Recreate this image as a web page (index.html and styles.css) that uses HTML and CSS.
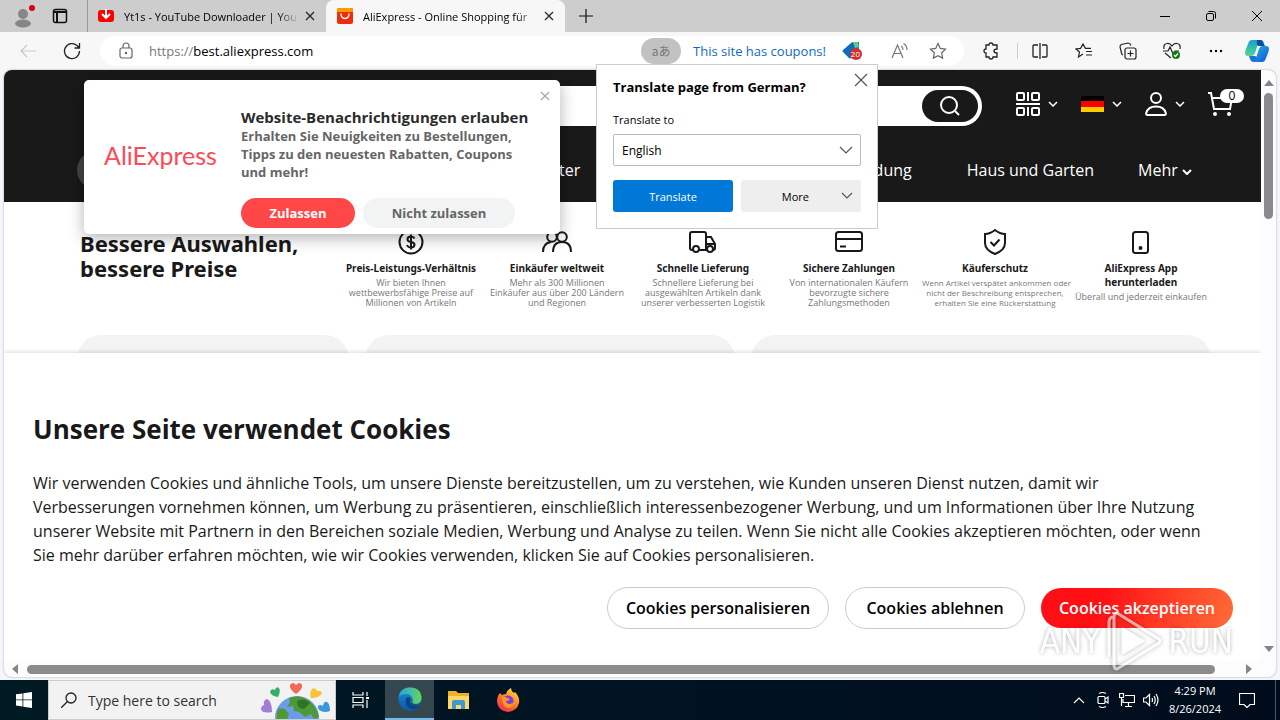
FILE: index.html
```html
<!DOCTYPE html>
<html lang="de">
<head>
  <meta charset="utf-8">
  <title>AliExpress - Online Shopping für</title>
  <link rel="stylesheet" href="styles.css">
</head>
<body>
<div class="tabs">
  <button class="profile" aria-label="Profile">
    <svg width="22" height="24" viewBox="0 0 22 24"><circle cx="10" cy="10" r="5" fill="#868686"/><ellipse cx="10" cy="19.500" rx="8" ry="4" fill="#868686"/><circle cx="19" cy="4" r="3" fill="#d80010"/></svg>
  </button>
  <button class="spaces" aria-label="Tab actions">
    <svg width="16" height="16" viewBox="0 0 16 16" fill="none" stroke="#111" stroke-width="1.500"><rect x="1.500" y="1.500" width="13" height="13" rx="2"/><path d="M1.500 4h13M5 4v10" stroke-width="2"/></svg>
  </button>
  <div class="tab">
    <svg width="16" height="16" viewBox="0 0 16 16"><rect y="2" width="16" height="12" rx="3" fill="#f00"/><path d="M8 1v8M4 6l4 4 4-4" fill="none" stroke="#fff" stroke-width="2"/></svg>
    <span class="tab-title">Yt1s - YouTube Downloader | You</span>
    <button aria-label="Close tab"><svg width="10" height="10" viewBox="0 0 10 10" stroke="#222" stroke-width="1.200"><path d="M1 1l8 8M9 1l-8 8"/></svg></button>
  </div>
  <div class="tab active">
    <svg width="16" height="16" viewBox="0 0 16 16"><rect width="16" height="16" rx="2" fill="#ee2c0a"/><path d="M0 4V2q0-2 2-2h12q2 0 2 2v2z" fill="#f90"/><path d="M4 5.500q0 5 4 5t4-5" fill="none" stroke="#fff" stroke-width="1.400"/></svg>
    <span class="tab-title">AliExpress - Online Shopping für</span>
    <button aria-label="Close tab"><svg width="10" height="10" viewBox="0 0 10 10" stroke="#222" stroke-width="1.200"><path d="M1 1l8 8M9 1l-8 8"/></svg></button>
  </div>
  <button class="new-tab" aria-label="New tab"><svg width="14" height="14" viewBox="0 0 14 14" stroke="#111" stroke-width="1.200"><path d="M7 0v14M0 7h14"/></svg></button>
  <div class="window-buttons">
    <button aria-label="Minimize"><svg width="10" height="10" viewBox="0 0 10 10" stroke="#000"><path d="M0 5.500h10"/></svg></button>
    <button aria-label="Restore"><svg width="10" height="10" viewBox="0 0 10 10" fill="none" stroke="#000"><rect x=".5" y="2.500" width="7" height="7" rx="1.500"/><path d="M2.500.5h5q2 0 2 2v5"/></svg></button>
    <button aria-label="Close"><svg width="10" height="10" viewBox="0 0 10 10" stroke="#000"><path d="M0 0l10 10M10 0L0 10"/></svg></button>
  </div>
</div>

<div class="toolbar">
  <button class="back" aria-label="Back"><svg width="16" height="14" viewBox="0 0 16 14" fill="none" stroke="#c9c9c9" stroke-width="1.200"><path d="M16 7H1M7 1L1 7l6 6"/></svg></button>
  <button class="reload" aria-label="Refresh"><svg width="18" height="18" viewBox="0 0 18 18" fill="none" stroke="#222" stroke-width="1.300"><path d="M16.500 9A7.500 7.500 0 1 1 14 3.500l2 2M16.500 1v5h-5"/></svg></button>
  <div class="address">
    <svg width="14" height="18" viewBox="0 0 14 18" fill="none" stroke="#666" stroke-width="1.200"><rect x="1" y="6" width="12" height="10" rx="2"/><path d="M4 6V4a3 3 0 0 1 6 0v2"/><circle cx="7" cy="11" r=".6" fill="#666"/></svg>
    <label for="url">https://</label><input id="url" value="best.aliexpress.com">
    <button class="lang" aria-label="Translate">aあ</button>
    <a class="coupons" href="#">This site has coupons!</a>
    <button class="tag" aria-label="Coupons">
      <svg width="22" height="20" viewBox="0 0 22 20"><path d="M1 9l8-7q1-1 3-1h5v6q0 2-1 3l-7 7q-1 1-2 0l-6-6q-1-1 0-2z" fill="#0f6cbd"/><path d="M11 1h5l1 5-4 1z" fill="#5ccf7a"/><circle cx="14" cy="13" r="6" fill="#d0302c"/></svg>
      <span>20</span>
    </button>
    <button class="read" aria-label="Read aloud"><svg width="18" height="18" viewBox="0 0 18 18" fill="none" stroke="#777" stroke-width="1.200"><path d="M1 16L6.500 3 12 16M3 11.500h7M10 4q2 1 2 4M12.500 1.500q3.500 2 3.500 6.500"/></svg></button>
    <button class="star" aria-label="Add to favorites"><svg width="18" height="18" viewBox="0 0 18 18" fill="none" stroke="#666" stroke-width="1.200"><path d="M9 1.500l2.300 4.900 5.200.7-3.800 3.700.9 5.300L9 13.600l-4.600 2.500.9-5.300L1.500 7.100l5.200-.7z"/></svg></button>
  </div>
  <div class="tools">
    <button aria-label="Extensions"><svg width="16" height="18" viewBox="0 0 16 18" fill="none" stroke="#222" stroke-width="1.300"><path d="M3 3h3q0-2 2-2t2 2h4v4q-3 0-3 2t3 2v4h-4q0 2-2 2t-2-2H3v-4q-2 0-2-2t2-2z"/></svg></button>
    <i></i>
    <button aria-label="Split screen"><svg width="16" height="16" viewBox="0 0 16 16" fill="none" stroke="#222" stroke-width="1.300"><path d="M6 2H2q-1 0-1 1v10q0 1 1 1h4M10 2h4q1 0 1 1v10q0 1-1 1h-4M8 0v16"/></svg></button>
    <button aria-label="Favorites"><svg width="18" height="16" viewBox="0 0 18 16" fill="none" stroke="#222" stroke-width="1.200"><path d="M8 11l-4.500 3 1-5L1 6l4.600-.6L8 1l2.400 4.400H16M11 8.500h6M11 12h6"/></svg></button>
    <button aria-label="Collections"><svg width="18" height="18" viewBox="0 0 18 18" fill="none" stroke="#222" stroke-width="1.200"><rect x="6" y="6" width="11" height="11" rx="2"/><path d="M11.500 8.500v6M8.500 11.500h6M4 13q-1 0-1.500-2L1 5q0-2 1.500-2.500L9 1q2 0 3 2.500"/></svg></button>
    <button aria-label="Browser essentials"><svg width="20" height="18" viewBox="0 0 20 18" fill="none" stroke="#222" stroke-width="1.200"><path d="M2 7q-1-5 3-5.500Q8 1 10 4q2-3 5-2.500Q19 2 18 7M1 9h5l2-4 3 7 2-3h4M3 11l6 5"/><circle cx="14" cy="13" r="4" fill="#107c10" stroke="none"/><path d="M12 13l1.500 1.500 2.500-3" stroke="#fff"/></svg></button>
    <button aria-label="Settings and more"><svg width="14" height="4" viewBox="0 0 14 4"><circle cx="2" cy="2" r="1.200"/><circle cx="7" cy="2" r="1.200"/><circle cx="12" cy="2" r="1.200"/></svg></button>
    <button class="copilot" aria-label="Copilot">
      <svg width="24" height="24" viewBox="0 0 24 24">
        <defs>
          <linearGradient id="cpa" x2="0" y2="1"><stop stop-color="#18a0d7"/><stop offset="1" stop-color="#50d890"/></linearGradient>
          <linearGradient id="cpb" x2="1" y2="1"><stop stop-color="#22b8e8"/><stop offset="1" stop-color="#1450d8"/></linearGradient>
        </defs>
        <path d="M7 1h9q-2 1-3 4l-3 9q-1 3-4 3H3q-3 0-3-3 0-2 3-9 1-4 4-4z" fill="url(#cpa)"/>
        <path d="M12 1h4q2 0 3 4l1 2h-6q-3 0-2-6z" fill="#0a4f9c"/>
        <path d="M17 7h4q3 0 3 3 0 2-3 9-1 4-4 4H8q2-1 3-4l3-9q1-3 3-3z" fill="url(#cpb)"/>
        <path d="M4 17h6l2 1q-1 5-4 5-2 0-3-3z" fill="#1a6fdc"/>
      </svg>
    </button>
  </div>
</div>

<div class="frame">
  <div class="page">
    <header>
      <div class="header-top">
        <a class="logo" href="#">AliExpress</a>
        <form class="search">
          <input aria-label="Suche">
          <button type="button" aria-label="Suchen"><svg width="22" height="22" viewBox="0 0 22 22" fill="none" stroke="#fff" stroke-width="2"><circle cx="10" cy="10" r="8"/><path d="M16 16l4 4"/></svg></button>
        </form>
        <div class="account">
          <a href="#" aria-label="App">
            <svg width="24" height="24" viewBox="0 0 24 24" fill="none" stroke="#fff" stroke-width="2"><rect x="1" y="1" width="7" height="7" rx="1"/><rect x="16" y="1" width="7" height="7" rx="1"/><rect x="1" y="16" width="7" height="7" rx="1"/><rect x="16" y="16" width="7" height="7" rx="1"/><path d="M12 0v9M0 12h24M12 15v9"/></svg>
            <svg class="arrow" width="10" height="6" viewBox="0 0 10 6"><path d="M1 1l4 4 4-4"/></svg>
          </a>
          <a href="#" aria-label="Deutschland">
            <span class="flag"></span>
            <svg class="arrow" width="10" height="6" viewBox="0 0 10 6"><path d="M1 1l4 4 4-4"/></svg>
          </a>
          <a href="#" aria-label="Konto">
            <svg width="22" height="26" viewBox="0 0 22 26" fill="none" stroke="#fff" stroke-width="2"><circle cx="11" cy="7" r="5"/><path d="M2 24q-1 0-.8-2Q3 15.500 11 15.500t9.800 6.500q.2 2-.8 2z"/></svg>
            <svg class="arrow" width="10" height="6" viewBox="0 0 10 6"><path d="M1 1l4 4 4-4"/></svg>
          </a>
          <a class="cart" href="#" aria-label="Warenkorb">
            <svg width="26" height="26" viewBox="0 0 26 26" fill="none" stroke="#fff" stroke-width="2"><path d="M0 2h3l3 16h16l2-11H4"/><circle cx="7" cy="23" r="1" fill="#fff"/><circle cx="21" cy="23" r="1" fill="#fff"/></svg>
            <span>0</span>
          </a>
        </div>
      </div>
      <nav>
        <button class="categories">Alle Kategorien</button>
        <a href="#">Computer</a>
        <a href="#">Accessoires</a>
        <a href="#">Herrenbekleidung</a>
        <a href="#">Haus und Garten</a>
        <a class="more" href="#">Mehr <svg class="arrow" width="10" height="6" viewBox="0 0 10 6"><path d="M1 1l4 4 4-4"/></svg></a>
      </nav>
    </header>

    <section class="benefits">
      <h2>Bessere Auswahlen, bessere Preise</h2>
      <div class="benefit">
        <svg width="28" height="28" viewBox="0 0 28 28"><circle cx="14" cy="14" r="11.500"/><path d="M17.500 10.500q-1-2-3.500-2-3.500 0-3.500 2.700 0 2.300 3.500 2.800t3.500 2.800q0 2.700-3.500 2.700-3 0-4-2.500M14 6.500v15"/></svg>
        <h3>Preis-Leistungs-Verhältnis</h3>
        <p>Wir bieten Ihnen<br>wettbewerbsfähige Preise auf<br>Millionen von Artikeln</p>
      </div>
      <div class="benefit">
        <svg width="32" height="28" viewBox="0 0 32 28"><circle cx="11" cy="9" r="4.800"/><circle cx="21" cy="9" r="4.800"/><path d="M2 24q0-9 8-10M12 24q0-10 9-10t9 10"/></svg>
        <h3>Einkäufer weltweit</h3>
        <p>Mehr als 300 Millionen<br>Einkäufer aus über 200 Ländern<br>und Regionen</p>
      </div>
      <div class="benefit">
        <svg width="28" height="28" viewBox="0 0 28 28"><path d="M4 22H3q-2 0-2-2V6q0-2 2-2h12q2 0 2 2v16h-7M17 9h5l4 7v4q0 2-2 2M17 16h9"/><circle cx="7" cy="21" r="3" fill="#fff"/><circle cx="21" cy="21" r="3" fill="#fff"/></svg>
        <h3>Schnelle Lieferung</h3>
        <p>Schnellere Lieferung bei<br>ausgewählten Artikeln dank<br>unserer verbesserten Logistik</p>
      </div>
      <div class="benefit">
        <svg width="28" height="28" viewBox="0 0 28 28"><rect x="1" y="4" width="26" height="19" rx="2.500"/><path d="M1 11h26M5 18.500h6"/></svg>
        <h3>Sichere Zahlungen</h3>
        <p>Von internationalen Käufern<br>bevorzugte sichere<br>Zahlungsmethoden</p>
      </div>
      <div class="benefit long">
        <svg width="28" height="28" viewBox="0 0 28 28"><path d="M14 2q5 4 10 4v9q0 7-10 11Q4 22 4 15V6q5 0 10-4zM9.500 14l3.500 3.500 5.500-6"/></svg>
        <h3>Käuferschutz</h3>
        <p>Wenn Artikel verspätet ankommen oder<br>nicht der Beschreibung entsprechen,<br>erhalten Sie eine Rückerstattung</p>
      </div>
      <div class="benefit">
        <svg width="28" height="28" viewBox="0 0 28 28"><rect x="6" y="4" width="15" height="21" rx="2.500"/><circle cx="13.500" cy="20" r="1" fill="#191919"/></svg>
        <h3>AliExpress App<br>herunterladen</h3>
        <p>Überall und jederzeit einkaufen</p>
      </div>
    </section>

    <div class="cards"><div></div><div></div><div></div></div>

    <div class="push">
      <button class="close" aria-label="Schließen"><svg width="10" height="10" viewBox="0 0 10 10" stroke="#aaa" stroke-width="1.400"><path d="M1 1l8 8M9 1l-8 8"/></svg></button>
      <div class="push-logo">AliExpress</div>
      <div class="push-body">
        <h3>Website-Benachrichtigungen erlauben</h3>
        <p>Erhalten Sie Neuigkeiten zu Bestellungen, Tipps zu den neuesten Rabatten, Coupons und mehr!</p>
        <button class="allow">Zulassen</button>
        <button class="deny">Nicht zulassen</button>
      </div>
    </div>

    <div class="cookies">
      <h2>Unsere Seite verwendet Cookies</h2>
      <p>Wir verwenden Cookies und ähnliche Tools, um unsere Dienste bereitzustellen, um zu verstehen, wie Kunden unseren Dienst nutzen, damit wir Verbesserungen vornehmen können, um Werbung zu präsentieren, einschließlich interessenbezogener Werbung, und um Informationen über Ihre Nutzung unserer Website mit Partnern in den Bereichen soziale Medien, Werbung und Analyse zu teilen. Wenn Sie nicht alle Cookies akzeptieren möchten, oder wenn Sie mehr darüber erfahren möchten, wie wir Cookies verwenden, klicken Sie auf Cookies personalisieren.</p>
      <div class="cookie-buttons">
        <button class="customize">Cookies personalisieren</button>
        <button class="reject">Cookies ablehnen</button>
        <button class="accept">Cookies akzeptieren</button>
      </div>
    </div>
  </div>
  <div class="scroll-y">
    <svg width="10" height="6" viewBox="0 0 10 6"><path d="M5 0l5 6H0z"/></svg>
    <div class="thumb"></div>
    <svg width="10" height="6" viewBox="0 0 10 6"><path d="M0 0h10L5 6z"/></svg>
  </div>
  <div class="scroll-x">
    <svg width="6" height="10" viewBox="0 0 6 10"><path d="M6 0v10L0 5z"/></svg>
    <div class="thumb"></div>
    <svg width="6" height="10" viewBox="0 0 6 10"><path d="M0 0l6 5-6 5z"/></svg>
  </div>
</div>

<form class="translate">
  <button type="button" class="close" aria-label="Close"><svg width="14" height="14" viewBox="0 0 14 14"><path d="M1 1l12 12M13 1L1 13"/></svg></button>
  <h3>Translate page from German?</h3>
  <label for="target">Translate to</label>
  <div class="select">
    <select id="target"><option>English</option></select>
    <svg width="14" height="8" viewBox="0 0 14 8"><path d="M1 1l6 6 6-6"/></svg>
  </div>
  <div class="translate-buttons">
    <button type="button" class="primary">Translate</button>
    <button type="button" class="secondary">More <svg width="12" height="8" viewBox="0 0 12 8"><path d="M1 1l5 5 5-5"/></svg></button>
  </div>
</form>

<div class="watermark">
  <span>ANY</span>
  <svg width="56" height="60" viewBox="0 0 56 60" fill="none" stroke="#fff" stroke-width="3" stroke-linejoin="round"><path d="M3 46V12q0-6 4-6M11 2l42 26q2 2 0 4L11 58q-3 0-3-4V6q0-4 3-4z"/><path d="M17 18l20 12-20 12z" fill="#fff"/></svg>
  <span>RUN</span>
</div>

<div class="taskbar">
  <button class="start" aria-label="Start"><svg width="16" height="16" viewBox="0 0 16 16" fill="#fff"><path d="M0 2.300l6.500-.9v6.100H0zM7.300 1.300L16 0v7.500H7.300zM0 8.300h6.500v6.200L0 13.600zM7.300 8.300H16V16l-8.700-1.300z"/></svg></button>
  <div class="task-search">
    <svg width="16" height="16" viewBox="0 0 16 16" fill="none" stroke="#222" stroke-width="1.300"><circle cx="10" cy="6" r="5"/><path d="M6.500 9.500L0 16"/></svg>
    <input aria-label="Search" placeholder="Type here to search">
    <svg width="70" height="38" viewBox="0 0 70 38">
      <circle cx="36" cy="37" r="22" fill="#6b9bea"/>
      <path d="M28 17q10-4 19 2 9 6 11 17l-5 2-3-5-6 3-6-5-5-1-1-5-6 1 3-5zM18 27l6 1 4 5-2 5H16q-1-6 2-11z" fill="#4d9a35"/>
      <path d="M36 20q8-4 13 2l-6 6q-7 0-7-8z" fill="#2f7425"/>
      <path d="M35 13q-7-5-6-9 3-4 6 0 4-4 6 0 1 4-6 9z" fill="#f2695a"/>
      <path d="M17 16q-7-1-8-5 1-4 5-2 1-4 4-2 2 3-1 9z" fill="#37ad68"/>
      <path d="M50 17q-2-6 1-9 4-2 5 2 4-1 5 2-2 5-11 5z" fill="#fac234"/>
      <path d="M11 31q-10 2-11-3 0-3 3-4-1-5 3-6 5 2 5 13z" fill="#a17ed5"/>
      <path d="M60 30q-4-2-3-5 2-2 5 0 1-5 4-4 3 2 3 9-5 2-9 0z" fill="#3a98e0"/>
    </svg>
  </div>
  <button aria-label="Task view"><svg width="18" height="16" viewBox="0 0 18 16" fill="none" stroke="#fff" stroke-width="1.200"><path d="M1 0v3h10V0M1 16v-3h10v3M1 5.500h10v5H1zM15 0v4M15 8v8"/><rect x="14" y="5" width="3" height="2" fill="#fff" stroke="none"/></svg></button>
  <button class="running" aria-label="Edge">
    <svg width="24" height="24" viewBox="0 0 24 24">
      <defs>
        <linearGradient id="edge1" x2="1"><stop stop-color="#23a6e8"/><stop offset="1" stop-color="#62d65a"/></linearGradient>
        <linearGradient id="edge2" x2="0" y2="1"><stop stop-color="#1b8fd8"/><stop offset="1" stop-color="#0c59a8"/></linearGradient>
      </defs>
      <circle cx="12" cy="12" r="11.500" fill="url(#edge2)"/>
      <path d="M.7 10Q2 .5 12 .5 23 .5 23.500 11q0 6-7 6-3 0-3-1.500 1-2 1-4Q13 7 8 7q-5 0-7.300 3z" fill="url(#edge1)"/>
      <path d="M8 11q-2 8 5 11 6 1 9-4-6 2-9-1-2-3 0-5-2-3-5-1z" fill="#0b4485"/>
      <path d="M14 11q1 3-1 5 1 4 9 1v2l3 3V13q-3 5-8 4-4-1-2-3z" fill="#34474f" opacity=".9"/>
    </svg>
  </button>
  <button aria-label="File Explorer"><svg width="22" height="20" viewBox="0 0 22 20"><path d="M0 1h8l2 2h11v16H0z" fill="#f0b02e"/><path d="M0 6h21v13H0z" fill="#ffd766"/><path d="M4 19v-7q0-2 2-2h9q2 0 2 2v7h-4v-4H8v4z" fill="#3f97d3"/></svg></button>
  <button aria-label="Firefox">
    <svg width="24" height="24" viewBox="0 0 24 24">
      <defs><linearGradient id="fox" x1=".8" y1="0" x2=".2" y2="1"><stop stop-color="#ffe24a"/><stop offset=".5" stop-color="#ff7a22"/><stop offset="1" stop-color="#ef2560"/></linearGradient></defs>
      <path d="M4 5l2 2q2-1 4-1 1-4 5-6 0 3 3 5l1-1q5 5 4 11-2 8-11 9Q2 23 1 14 1 8 4 5z" fill="url(#fox)"/>
      <circle cx="12" cy="13" r="5.500" fill="#7543d5"/>
      <path d="M6 9q3-1 5 1l3 1q-1 2-4 2 0 3 4 3 3 0 5-3-1 7-7 7-6-1-6-11z" fill="#ff9822"/>
    </svg>
  </button>
  <div class="tray">
    <button aria-label="Hidden icons"><svg width="12" height="8" viewBox="0 0 12 8"><path d="M1 7l5-5 5 5"/></svg></button>
    <button aria-label="Meet now"><svg width="14" height="18" viewBox="0 0 14 18"><rect x="2" y="5.500" width="7" height="7" rx="1"/><path d="M9 8l3-2v6l-3-2M3 2.500q3.500-2 7 0M3 15.500q3.500 2 7 0"/></svg></button>
    <button aria-label="Network"><svg width="16" height="16" viewBox="0 0 16 16"><path d="M6 3.500h9.500v7H4V7M9.500 11v3M6 14.500h7M.5 1.500h4v4h-4zM2.500 6v8"/></svg></button>
    <button aria-label="Volume"><svg width="16" height="16" viewBox="0 0 16 16"><path d="M.5 6v4H3l3.500 3.500v-11L3 6zM9 6q1 2 0 4M11 4q2.500 4 0 8M13 2q4 6 0 12"/></svg></button>
    <div class="clock">4:29 PM<br>8/26/2024</div>
    <button class="notices" aria-label="Notifications"><svg width="16" height="16" viewBox="0 0 16 16"><path d="M.5 1.500h15v11H11l-3 3-3-3H.5z"/></svg></button>
  </div>
</div>
</body>
</html>
```
FILE: styles.css
```css
* {
    box-sizing: border-box;
}

body {
    display: flex;
    flex-direction: column;
    height: 100vh;
    margin: 0;
    background: #f3f6fa;
    color: #000;
    font-family: "Open Sans", "Noto Sans CJK JP", sans-serif;
    overflow: hidden;
    position: relative;
}

button {
    display: flex;
    align-items: center;
    justify-content: center;
    flex: none;
    padding: 0;
    border: 0;
    background: none;
    color: inherit;
    font-family: inherit;
}

input, select {
    min-width: 0;
    border: 0;
    padding: 0;
    background: none;
    outline: 0;
    font-family: inherit;
}

a {
    color: inherit;
    text-decoration: none;
}

h2, h3, p {
    margin: 0;
}

svg {
    flex: none;
}

/* browser chrome */

.tabs {
    display: flex;
    align-items: stretch;
    height: 32px;
    background: #cdcdcd;
    font-size: 11px;
}

.profile {
    width: 44px;
    padding-left: 4px;
}

.spaces {
    width: 32px;
}

.tab {
    display: flex;
    align-items: center;
    width: 239px;
    margin-left: 11px;
    padding: 0 11px 0 10px;
    border-left: 1px solid #999;
}

.tab.active {
    margin-left: 0;
    border-color: #f7f7f7;
    border-radius: 8px 8px 0 0;
    background: #f7f7f7;
}

.tab-title {
    flex: 1;
    margin: 0 6px 0 10px;
    overflow: hidden;
    white-space: nowrap;
    -webkit-mask-image: linear-gradient(to right, #000 88%, transparent);
    mask-image: linear-gradient(to right, #000 88%, transparent);
}

.new-tab {
    width: 42px;
}

.window-buttons {
    display: flex;
    margin-left: auto;
}

.window-buttons button {
    width: 46px;
}

.toolbar {
    display: flex;
    align-items: center;
    height: 38px;
    background: #f7f7f7;
}

.back {
    width: 56px;
}

.reload {
    width: 32px;
}

.address {
    display: flex;
    flex: 1;
    align-items: center;
    height: 30px;
    margin-left: 12px;
    padding: 0 10px 0 19px;
    border-radius: 15px;
    background: #fff;
    font-size: 13px;
}

.address label {
    margin-left: 16px;
    color: #777;
}

.address input {
    flex: 1;
    font-size: 13px;
}

.lang {
    width: 40px;
    height: 26px;
    border-radius: 13px;
    background: #c2c2c2;
    color: #777;
    font-family: "Noto Sans CJK JP", sans-serif;
    font-size: 12px;
    line-height: 16px;
}

.coupons {
    margin-left: 12px;
    color: #0f6cbd;
}

.tag {
    position: relative;
    margin-left: 16px;
}

.tag span {
    position: absolute;
    right: 4px;
    bottom: 2px;
    color: #fff;
    font-size: 8px;
    line-height: 10px;
}

.read {
    width: 44px;
    margin-left: 14px;
}

.star {
    width: 32px;
}

.tools {
    display: flex;
    align-items: center;
    margin: 0 4px 0 5px;
}

.tools button {
    width: 44px;
    height: 32px;
}

.tools i {
    width: 1px;
    height: 16px;
    margin: 0 0 0 4px;
    background: #ccc;
}

.tools .copilot {
    width: 38px;
}

/* web page */

.frame {
    display: grid;
    grid-template: minmax(0, 1fr) 16px / minmax(0, 1fr) 15px;
    flex: 1;
    min-height: 0;
    margin: 0 4px 3px;
    border-radius: 8px;
    background: #fcfcfc;
    box-shadow: 0 0 2px #999;
    overflow: hidden;
}

.page {
    position: relative;
    background: #fff;
    overflow: hidden;
}

header {
    height: 132px;
    padding: 16px 17px 0 73px;
    background: #191919;
    color: #fff;
}

.header-top {
    display: flex;
    align-items: center;
}

.logo {
    width: 180px;
    padding-left: 16px;
    font-size: 28px;
}

.search {
    display: flex;
    flex: 1;
    height: 40px;
    padding: 4px;
    border-radius: 20px;
    background: #fff;
}

.search input {
    flex: 1;
}

.search button {
    width: 56px;
    border-radius: 16px;
    background: #191919;
}

.account {
    display: flex;
    align-items: center;
    gap: 23px;
    margin-left: 34px;
    padding-bottom: 4px;
}

.account a {
    display: flex;
    align-items: center;
    gap: 8px;
}

.arrow {
    fill: none;
    stroke: #fff;
    stroke-width: 1.5;
}

.flag {
    width: 23px;
    height: 16px;
    background: linear-gradient(#000 33%, #f00 33% 66%, #fc0 66%);
}

.cart {
    position: relative;
    width: 36px;
}

.cart span {
    position: absolute;
    top: -2px;
    right: 0;
    width: 24px;
    border-radius: 7px;
    background: #fff;
    color: #000;
    font-size: 12px;
    line-height: 14px;
    text-align: center;
}

nav {
    display: flex;
    align-items: center;
    gap: 55px;
    margin-top: 25px;
    padding-right: 52px;
    font-size: 16px;
}

.categories {
    width: 200px;
    height: 38px;
    margin-right: auto;
    border-radius: 19px;
    background: #444;
    font-size: 16px;
}

nav .more {
    margin-left: -11px;
}

.more .arrow {
    vertical-align: 1px;
    stroke-width: 2;
}

.benefits {
    display: flex;
    padding: 26px 47px 0 76px;
    font-family: "Noto Sans", sans-serif;
}

.benefits h2 {
    flex: none;
    width: 258px;
    margin-top: 3px;
    padding-right: 20px;
    color: #191919;
    font-size: 22px;
    line-height: 25px;
}

.benefit {
    flex: 1;
    min-width: 0;
    text-align: center;
    white-space: nowrap;
}

.benefit svg {
    display: block;
    margin: 0 auto;
    fill: none;
    stroke: #191919;
    stroke-width: 2;
}

.benefit h3 {
    margin-top: 5px;
    color: #191919;
    font-size: 10px;
    line-height: 14px;
}

.benefit p {
    margin-top: 3px;
    color: #777;
    font-family: "Open Sans", sans-serif;
    font-size: 9px;
    line-height: 10px;
}

.benefit.long p {
    font-size: 8px;
}

.cards {
    display: grid;
    grid-template-columns: 272fr 370fr 460fr;
    gap: 16px;
    height: 200px;
    margin: 27px 50px 0 73px;
}

.cards div {
    border-radius: 24px;
    background: #f3f3f3;
}

.push {
    position: absolute;
    top: 10px;
    left: 80px;
    display: flex;
    width: 476px;
    height: 154px;
    padding: 27px 20px 0;
    border-radius: 5px;
    background: #fff;
    box-shadow: 0 4px 16px rgb(0 0 0 / 30%);
}

.push .close {
    position: absolute;
    top: 11px;
    right: 10px;
}

.push-logo {
    width: 137px;
    padding-top: 33px;
    color: #fd4a55;
    font-family: Lato, sans-serif;
    font-size: 25px;
    line-height: 30px;
}

.push-body {
    display: flex;
    flex: 1;
    flex-wrap: wrap;
    align-content: flex-start;
    gap: 0 8px;
}

.push-body h3 {
    color: #2b2b2b;
    font-size: 15px;
    line-height: 20px;
    white-space: nowrap;
}

.push-body p {
    width: 290px;
    margin-bottom: 17px;
    color: #666;
    font-size: 13px;
    font-weight: 700;
    line-height: 18px;
}

.push-body button {
    height: 30px;
    border-radius: 15px;
    font-size: 13px;
    font-weight: 700;
}

.push-body .allow {
    width: 114px;
    background: #ff4747;
    color: #fff;
}

.push-body .deny {
    width: 152px;
    background: #f2f3f3;
    color: #666;
}

.cookies {
    position: absolute;
    right: 0;
    bottom: 0;
    left: 0;
    padding: 58px 28px 32px 29px;
    background: #fff;
    box-shadow: 0 -1px 4px rgb(0 0 0 / 15%);
    color: #191919;
}

.cookies h2 {
    font-size: 26px;
    line-height: 36px;
}

.cookies p {
    margin-top: 24px;
    padding-right: 16px;
    font-size: 16px;
    line-height: 24px;
}

.cookie-buttons {
    display: flex;
    justify-content: flex-end;
    align-items: center;
    gap: 16px;
    margin-top: 20px;
}

.cookie-buttons button {
    height: 42px;
    border: 1px solid #ccc;
    border-radius: 21px;
    color: #000;
    font-size: 16px;
    font-weight: 600;
}

.cookie-buttons .customize {
    width: 222px;
}

.cookie-buttons .reject {
    width: 180px;
}

.cookie-buttons .accept {
    width: 192px;
    height: 40px;
    border: 0;
    background: linear-gradient(110deg, #ff0e14 30%, #ff6d38);
    color: #fff;
}

.scroll-y, .scroll-x {
    display: flex;
    align-items: center;
    fill: #858585;
}

.scroll-y {
    flex-direction: column;
    padding: 10px 0 9px;
}

.scroll-x {
    padding: 0 9px 0 8px;
}

.thumb {
    border-radius: 5px;
    background: #8b8b8b;
}

.scroll-y .thumb {
    width: 9px;
    height: 126px;
    margin: 7px 0 auto;
}

.scroll-x .thumb {
    flex: 1;
    height: 9px;
    margin: 0 31px 0 9px;
}

/* translate flyout */

.translate {
    position: absolute;
    top: 64px;
    right: 402px;
    width: 282px;
    height: 165px;
    padding: 13px 16px;
    border: 1px solid #ccc;
    background: #fff;
    font-size: 11px;
}

.translate .close {
    position: absolute;
    top: 8px;
    right: 9px;
}

.translate h3 {
    margin-bottom: 15px;
    font-size: 13px;
    line-height: 18px;
}

.translate label {
    display: block;
    line-height: 18px;
}

.translate svg {
    fill: none;
    stroke: #555;
    stroke-width: 1.2;
}

.select {
    position: relative;
    margin: 5px 0 14px;
}

.select select {
    display: block;
    width: 100%;
    height: 32px;
    padding: 0 8px;
    border: 1px solid #bbb;
    border-radius: 2px;
    appearance: none;
    color: #000;
    font-size: 12px;
}

.select svg {
    position: absolute;
    top: 12px;
    right: 8px;
}

.translate-buttons {
    display: grid;
    grid-template-columns: 1fr 1fr;
    gap: 8px;
}

.translate-buttons button {
    height: 32px;
    border-radius: 3px;
    background: #eee;
    font-size: 11px;
}

.translate-buttons .primary {
    background: #0078d7;
    color: #fff;
}

.translate-buttons .secondary {
    justify-content: flex-end;
    gap: 32px;
    padding-right: 8px;
}

.watermark {
    position: absolute;
    right: 47px;
    bottom: 49px;
    display: flex;
    align-items: center;
    gap: 6px;
    color: #fff;
    filter: drop-shadow(0 0 2px rgb(0 0 0 / 50%));
    font-family: "Liberation Sans Narrow", "DejaVu Sans Condensed", sans-serif;
    font-size: 33px;
    opacity: .6;
    pointer-events: none;
}

/* taskbar */

.taskbar {
    display: flex;
    height: 40px;
    background: linear-gradient(to right, #001a24, #000c1c);
    color: #fff;
}

.taskbar > button {
    width: 49px;
}

.taskbar > .start {
    width: 48px;
}

.task-search {
    display: flex;
    align-items: center;
    width: 288px;
    padding: 0 4px 0 12px;
    border: 1px solid #ccc;
    background: #f2f2f2;
}

.task-search input {
    flex: 1;
    margin-left: 11px;
    font-size: 14px;
}

.task-search input::placeholder {
    color: #333;
}

.taskbar .running {
    border-bottom: 2px solid #76b9ed;
    background: #34474f;
}

.tray {
    display: flex;
    align-items: center;
    margin-left: auto;
    padding-right: 4px;
}

.tray button {
    width: 24px;
}

.tray svg {
    fill: none;
    stroke: #fff;
    stroke-width: 1.2;
}

.clock {
    width: 64px;
    font-size: 11px;
    line-height: 18px;
    text-align: center;
    white-space: nowrap;
}

.tray .notices {
    width: 49px;
    height: 40px;
    padding-right: 8px;
    border-right: 1px solid #456;
}
```
